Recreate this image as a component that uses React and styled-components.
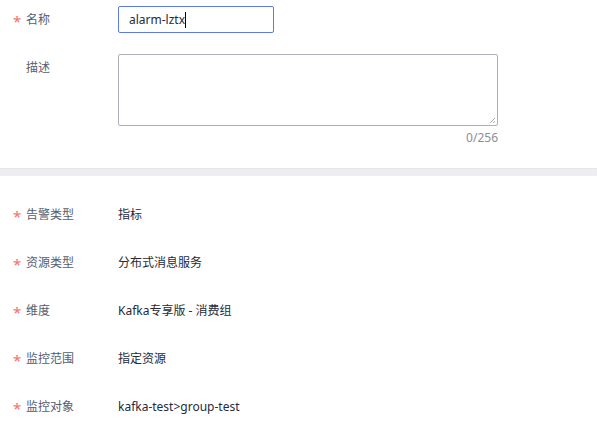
import React from 'react';
import styled, { createGlobalStyle } from 'styled-components';

const GlobalStyle = createGlobalStyle`
  body {
    margin: 0;
    background: #fff;
    font-family: "Noto Sans", "Noto Sans CJK SC", sans-serif;
    font-size: 12px;
    color: #252b3a;
  }
`;

const Page = styled.div`
  width: 597px;
  height: 429px;
  overflow: hidden;
  background: #fff;
`;

const EditSection = styled.div`
  padding: 6px 0 0 12px;
  height: 168px;
  box-sizing: border-box;
`;

const Divider = styled.div`
  height: 8px;
  background: #eeeef2;
  box-shadow: inset 0 1px 1px rgba(0, 0, 0, 0.04);
`;

const InfoSection = styled.div`
  padding: 15px 0 0 12px;
`;

const FormRow = styled.div`
  display: flex;
  align-items: ${(p) => (p.$top ? 'flex-start' : 'center')};
  margin-top: ${(p) => p.$gap || 0}px;
`;

const InfoRow = styled.div`
  display: flex;
  align-items: center;
  height: 48px;
`;

const Label = styled.div`
  width: 106px;
  flex-shrink: 0;
  display: flex;
  align-items: center;
  color: #575d6c;
  line-height: 18px;
  padding-top: ${(p) => (p.$top ? 5 : 0)}px;
`;

const Star = styled.span`
  width: 14px;
  color: #f66f6a;
  font-size: 15px;
  line-height: 18px;
  transform: translate(1px, 1px);
  visibility: ${(p) => (p.$hidden ? 'hidden' : 'visible')};
`;

const Value = styled.div`
  color: #252b3a;
  line-height: 18px;
`;

const TextInput = styled.div`
  width: 156px;
  height: 27px;
  box-sizing: border-box;
  border: 1px solid #5e7ce0;
  border-radius: 2px;
  padding: 0 10px;
  display: flex;
  align-items: center;
  color: #252b3a;
  font-size: 12px;
`;

const Caret = styled.span`
  display: inline-block;
  width: 1px;
  height: 16px;
  background: #000;
`;

const AreaWrap = styled.div`
  display: flex;
  flex-direction: column;
  align-items: flex-end;
`;

const TextArea = styled.div`
  position: relative;
  width: 380px;
  height: 72px;
  box-sizing: border-box;
  border: 1px solid #adb0b8;
  border-radius: 2px;
`;

const Grip = styled.svg`
  position: absolute;
  right: 1px;
  bottom: 1px;
`;

const Counter = styled.div`
  margin-top: 3px;
  color: #8a8e99;
  line-height: 18px;
`;

const info = [
  ['告警类型', '指标'],
  ['资源类型', '分布式消息服务'],
  ['维度', 'Kafka专享版 - 消费组'],
  ['监控范围', '指定资源'],
  ['监控对象', 'kafka-test>group-test'],
];

export default function App() {
  return (
    <Page>
      <GlobalStyle />
      <EditSection>
        <FormRow>
          <Label>
            <Star>*</Star>名称
          </Label>
          <TextInput>
            alarm-lztx<Caret />
          </TextInput>
        </FormRow>
        <FormRow $top $gap={21}>
          <Label $top>
            <Star $hidden>*</Star>描述
          </Label>
          <AreaWrap>
            <TextArea>
              <Grip width="7" height="7" viewBox="0 0 7 7">
                <path d="M6 1 L1 6 M6 4 L4 6" stroke="#adb0b8" strokeWidth="1" />
              </Grip>
            </TextArea>
            <Counter>0/256</Counter>
          </AreaWrap>
        </FormRow>
      </EditSection>
      <Divider />
      <InfoSection>
        {info.map(([k, v]) => (
          <InfoRow key={k}>
            <Label>
              <Star>*</Star>
              {k}
            </Label>
            <Value>{v}</Value>
          </InfoRow>
        ))}
      </InfoSection>
    </Page>
  );
}
